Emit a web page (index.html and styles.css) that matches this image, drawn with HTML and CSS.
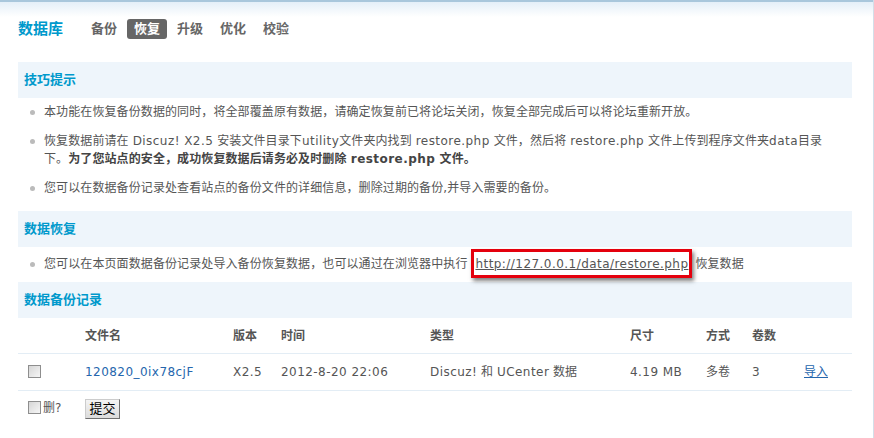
FILE: index.html
```html
<!DOCTYPE html>
<html lang="zh-CN">
<head>
    <meta charset="UTF-8">
    <title>数据库 - 恢复</title>
    <link rel="stylesheet" href="styles.css">
</head>
<body>
<div class="frame">
    <div class="main">

        <div class="nav">
            <span class="nav-title">数据库</span>
            <a class="nav-item">备份</a>
            <a class="nav-item current">恢复</a>
            <a class="nav-item">升级</a>
            <a class="nav-item">优化</a>
            <a class="nav-item">校验</a>
        </div>

        <div class="section-head">技巧提示</div>
        <ul class="tips">
            <li>本功能在恢复备份数据的同时，将全部覆盖原有数据，请确定恢复前已将论坛关闭，恢复全部完成后可以将论坛重新开放。</li>
            <li>恢复数据前请在 <span class="en">Discuz! X2.5</span> 安装文件目录下<span class="en">utility</span>文件夹内找到 <span class="en">restore.php</span> 文件，然后将 <span class="en">restore.php</span> 文件上传到程序文件夹<span class="en">data</span>目录<br>下。<b>为了您站点的安全，成功恢复数据后请务必及时删除 <span class="en">restore.php</span> 文件。</b></li>
            <li>您可以在数据备份记录处查看站点的备份文件的详细信息，删除过期的备份,并导入需要的备份。</li>
        </ul>

        <div class="section-head">数据恢复</div>
        <ul class="tips single">
            <li>您可以在本页面数据备份记录处导入备份恢复数据，也可以通过在浏览器中执行 <a class="restore-link en" href="#">http://127.0.0.1/data/restore.php</a> 恢复数据</li>
        </ul>

        <div class="section-head">数据备份记录</div>
        <table class="backups">
            <colgroup>
                <col style="width: 67px">
                <col style="width: 148px">
                <col style="width: 48px">
                <col style="width: 149px">
                <col style="width: 200px">
                <col style="width: 76px">
                <col style="width: 46px">
                <col style="width: 52px">
                <col>
            </colgroup>
            <tr class="head-row">
                <th></th>
                <th>文件名</th>
                <th>版本</th>
                <th>时间</th>
                <th>类型</th>
                <th>尺寸</th>
                <th>方式</th>
                <th>卷数</th>
                <th></th>
            </tr>
            <tr class="data-row">
                <td><input type="checkbox" class="chk"></td>
                <td><a class="file-link en" href="#">120820_0ix78cjF</a></td>
                <td class="en">X2.5</td>
                <td class="en">2012-8-20 22:06</td>
                <td><span class="en">Discuz!</span> 和 <span class="en">UCenter</span> 数据</td>
                <td class="en">4.19 MB</td>
                <td>多卷</td>
                <td>3</td>
                <td><a class="import-link" href="#">导入</a></td>
            </tr>
            <tr class="foot-row">
                <td><label class="del"><input type="checkbox" class="chk">删?</label></td>
                <td colspan="8"><button class="btn">提交</button></td>
            </tr>
        </table>

    </div>
</div>
</body>
</html>
```

FILE: styles.css
```css
body {
    margin: 0;
    font-family: "DejaVu Sans", "Noto Sans CJK SC", sans-serif;
    font-size: 12px;
    color: #555;
    background: #fff;
}
.frame {
    min-height: 438px;
    box-sizing: border-box;
    border-right: 1px solid #d3dfe9;
    background: linear-gradient(#a9c7dc 0, #a9c7dc 2px, #e4eff8 2px, #fff 17px) no-repeat;
    background-size: 100% 17px;
    padding-top: 19px;
}
.main {
    padding: 0 21px 0 18px;
}

/* latin runs are a bit wider in the original font */
.en {
    letter-spacing: 0.45px;
}

/* top menu */
.nav {
    display: flex;
    align-items: center;
    height: 20px;
    margin-bottom: 23px;
}
.nav-title {
    font-size: 15px;
    font-weight: bold;
    color: #09c;
    margin-right: 21px;
    line-height: 20px;
}
.nav-item {
    display: block;
    padding: 0 7px;
    margin-right: 3px;
    line-height: 20px;
    font-size: 13px;
    font-weight: bold;
    color: #666;
    border-radius: 3px;
}
.nav-item.current {
    background: #666;
    color: #fff;
}

/* blue section bars */
.section-head {
    height: 36px;
    line-height: 36px;
    padding-left: 6px;
    background: #eef5fb;
    color: #09c;
    font-size: 13px;
    font-weight: bold;
}

.tips {
    list-style: none;
    margin: 0;
    padding: 0 28px 8px 26px;
}
.tips li {
    position: relative;
    padding: 5px 0 6px;
    line-height: 18px;
    letter-spacing: 0.1px;
}
.tips li::before {
    content: "";
    position: absolute;
    left: -14px;
    top: 12px;
    width: 5px;
    height: 5px;
    border-radius: 50%;
    background: #bbb;
}
.tips b {
    color: #444;
}
.tips.single {
    padding-bottom: 0;
}
.tips.single li {
    padding: 8px 0 9px;
}
.tips.single li::before {
    top: 15px;
}

.restore-link {
    position: relative;
    display: inline-block;
    color: #555;
    text-decoration: underline;
    margin: 0 3px 0 4px;
}
/* red annotation frame drawn over the link */
.restore-link::after {
    content: "";
    position: absolute;
    left: -4px;
    right: -4px;
    top: -6px;
    bottom: -5px;
    border: 3px solid #e4000d;
    box-shadow: 2px 3px 4px rgba(0, 0, 0, 0.5);
}

/* backup table */
.backups {
    width: 100%;
    border-collapse: collapse;
    table-layout: fixed;
}
.backups th,
.backups td {
    padding: 0;
    text-align: left;
    line-height: 18px;
    white-space: nowrap;
}
.backups th {
    height: 35px;
    font-weight: bold;
    color: #555;
}
.head-row,
.data-row {
    border-bottom: 1px solid #e3edf5;
}
.data-row td {
    height: 36px;
}
.foot-row td {
    height: 36px;
}
.file-link {
    color: #2566ad;
    text-decoration: none;
}
.import-link {
    color: #2566ad;
    text-decoration: underline;
}

.chk {
    appearance: none;
    -webkit-appearance: none;
    box-sizing: border-box;
    width: 13px;
    height: 13px;
    margin: 0 0 0 10px;
    border: 1px solid #8e8e8e;
    background: linear-gradient(135deg, #d6d6d6, #f6f6f6);
    vertical-align: -2px;
}
.del {
    display: inline-flex;
    align-items: center;
    gap: 2px;
}
.del .chk {
    vertical-align: middle;
}

.btn {
    font-family: "DejaVu Sans", "Noto Sans CJK SC", sans-serif;
    font-size: 13px;
    color: #000;
    width: 35px;
    height: 20px;
    padding: 0;
    border: 1px solid #888;
    border-color: #ccc #707070 #707070 #ccc;
    background: linear-gradient(#f4f4f4, #dcdcdc);
    line-height: 16px;
}
```
